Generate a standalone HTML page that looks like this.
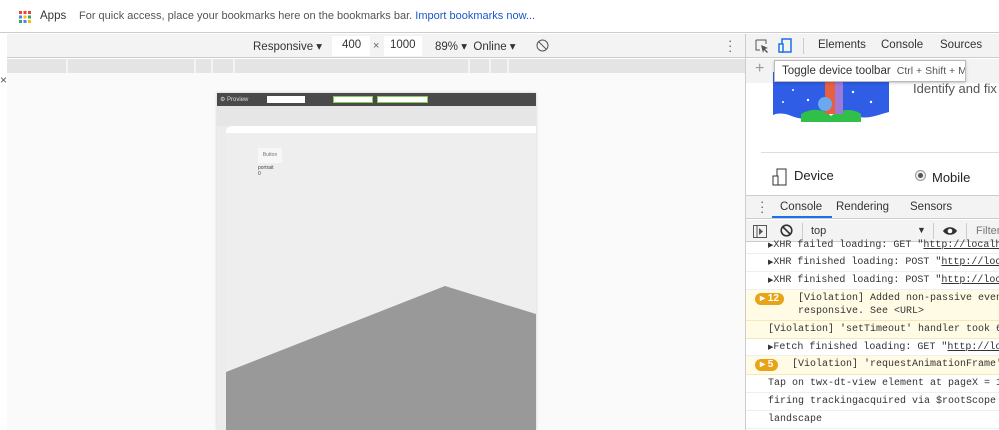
<!DOCTYPE html><html><head><style>
*{margin:0;padding:0;box-sizing:border-box}
body{width:999px;height:430px;overflow:hidden;background:#fff;font-family:"Liberation Sans",sans-serif;position:relative}
.a{position:absolute}
.mono{font-family:"Liberation Mono",monospace;font-size:10px;color:#333}
.row{position:absolute;left:746px;width:253px;height:18px;border-bottom:1px solid #efefef;padding-left:22px;line-height:17px;white-space:nowrap;overflow:hidden}
.y{background:#fffbe5;border-color:#f5e9b5}
.badge{position:absolute;left:9px;top:3px;background:#e8a317;color:#fff;border-radius:7px;font:bold 10px "Liberation Sans",sans-serif;padding:0 5px;height:12px;line-height:12px}
</style></head><body>
<div class="a" style="left:0;top:0;width:999px;height:33px;background:#fff;border-bottom:1px solid #ccc"></div>
<svg class="a" style="left:19px;top:11px" width="12" height="12"><g>
<rect x="0" y="0" width="3" height="3" fill="#ea4335"/><rect x="4.5" y="0" width="3" height="3" fill="#ea4335"/><rect x="9" y="0" width="3" height="3" fill="#ea4335"/>
<rect x="0" y="4.5" width="3" height="3" fill="#4285f4"/><rect x="4.5" y="4.5" width="3" height="3" fill="#fbbc05"/><rect x="9" y="4.5" width="3" height="3" fill="#34a853"/>
<rect x="0" y="9" width="3" height="3" fill="#34a853"/><rect x="4.5" y="9" width="3" height="3" fill="#4285f4"/><rect x="9" y="9" width="3" height="3" fill="#fbbc05"/></g></svg>
<div class="a" style="left:40px;top:10px;font-size:11.5px;color:#333">Apps</div>
<div class="a" style="left:79px;top:10px;font-size:11px;color:#555;white-space:nowrap">For quick access, place your bookmarks here on the bookmarks bar. <span style="color:#1a57c9">Import bookmarks now...</span></div>
<div class="a" style="left:7px;top:34px;width:738px;height:24px;background:#f3f3f3;border-bottom:1px solid #ccc"></div>
<div class="a" style="left:253px;top:39px;font-size:11.5px;color:#333">Responsive ▾</div>
<div class="a" style="left:332px;top:36px;width:38px;height:20px;background:#fff"></div>
<div class="a" style="left:342px;top:39px;font-size:11.5px;color:#333">400</div>
<div class="a" style="left:373px;top:40px;font-size:11px;color:#666">×</div>
<div class="a" style="left:384px;top:36px;width:38px;height:20px;background:#fff"></div>
<div class="a" style="left:390px;top:39px;font-size:11.5px;color:#333">1000</div>
<div class="a" style="left:435px;top:39px;font-size:11.5px;color:#333">89% ▾ &nbsp;Online ▾</div>
<svg class="a" style="left:536px;top:39px" width="13" height="13"><circle cx="6.5" cy="6.5" r="5.5" fill="none" stroke="#555"/><line x1="2.5" y1="2.5" x2="10.5" y2="10.5" stroke="#555"/></svg>
<div class="a" style="left:728px;top:38px;font-size:13px;color:#555;line-height:5px;width:4px;text-align:center">·<br>·<br>·</div>
<div class="a" style="left:7px;top:59px;width:738px;height:14px;background:#e4e4e4"></div>
<div class="a" style="left:66px;top:59px;width:2px;height:14px;background:#f3f3f3"></div>
<div class="a" style="left:194px;top:59px;width:2px;height:14px;background:#f3f3f3"></div>
<div class="a" style="left:211px;top:59px;width:2px;height:14px;background:#f3f3f3"></div>
<div class="a" style="left:233px;top:59px;width:2px;height:14px;background:#f3f3f3"></div>
<div class="a" style="left:468px;top:59px;width:2px;height:14px;background:#f3f3f3"></div>
<div class="a" style="left:489px;top:59px;width:2px;height:14px;background:#f3f3f3"></div>
<div class="a" style="left:507px;top:59px;width:2px;height:14px;background:#f3f3f3"></div>
<div class="a" style="left:7px;top:73px;width:738px;height:357px;background:#fafafa"></div>
<div class="a" style="left:0;top:73px;font-size:12px;color:#555">×</div>
<div class="a" style="left:217px;top:93px;width:319px;height:337px;background:#ececec;box-shadow:0 0 3px #ccc"></div>
<div class="a" style="left:217px;top:93px;width:319px;height:13px;background:#4a4a4a"></div>
<div class="a" style="left:220px;top:96px;font-size:6px;color:#ddd">⚙ Proview</div>
<div class="a" style="left:267px;top:96px;width:38px;height:7px;background:#fff"></div>
<div class="a" style="left:333px;top:96px;width:40px;height:7px;background:#fff;border:1px solid #8c5"></div>
<div class="a" style="left:377px;top:96px;width:51px;height:7px;background:#fff;border:1px solid #8c5"></div>
<div class="a" style="left:217px;top:106px;width:319px;height:20px;background:#e6e6e6"></div>
<div class="a" style="left:226px;top:126px;width:310px;height:304px;background:#fff;border-radius:6px 0 0 0"></div>
<div class="a" style="left:226px;top:133px;width:310px;height:297px;background:#eeeeee"></div>
<svg class="a" style="left:226px;top:133px" width="310" height="297"><polygon points="0,239 219,153 310,181 310,297 0,297" fill="#999"/></svg>
<div class="a" style="left:258px;top:148px;width:24px;height:15px;background:#f7f7f7;font-size:5px;color:#777;text-align:center;line-height:15px">Button</div>
<div class="a" style="left:258px;top:165px;font-size:5px;color:#444;line-height:6px">portrait<br>0</div>
<div class="a" style="left:745px;top:34px;width:254px;height:396px;background:#fff;border-left:1px solid #ccc"></div>
<div class="a" style="left:746px;top:34px;width:253px;height:24px;background:#f3f3f3;border-bottom:1px solid #ccc"></div>
<svg class="a" style="left:755px;top:39px" width="14" height="14"><path d="M1 1h10v4M1 1v10h4" fill="none" stroke="#555"/><path d="M6 6l7 3-3 1 3 3-1 1-3-3-1 3z" fill="#555"/></svg>
<svg class="a" style="left:778px;top:38px" width="14" height="15"><rect x="4" y="1" width="9" height="13" fill="none" stroke="#1a73e8" stroke-width="1.5"/><rect x="1" y="6" width="4" height="8" fill="#fff" stroke="#1a73e8" stroke-width="1.5"/></svg>
<div class="a" style="left:803px;top:38px;width:1px;height:16px;background:#ccc"></div>
<div class="a" style="left:818px;top:39px;font-size:11.5px;color:#333">Elements</div>
<div class="a" style="left:881px;top:39px;font-size:11.5px;color:#333">Console</div>
<div class="a" style="left:940px;top:39px;font-size:11.5px;color:#333">Sources</div>
<div class="a" style="left:746px;top:59px;width:253px;height:24px;background:#f3f3f3"></div>
<div class="a" style="left:755px;top:60px;font-size:16px;color:#999">+</div>
<svg class="a" style="left:773px;top:72px" width="120" height="52"><path d="M0 0h116v40c-12 3-22 8-34 4-12-5-22-5-30 0-12 5-24 4-36-1-6-2-12-2-16 0z" fill="#2f5de6"/><path d="M28 42c10-6 22-6 30 2 8-7 22-8 30-2v8H28z" fill="#30c04a"/><rect x="52" y="0" width="10" height="42" fill="#e96040"/><rect x="62" y="0" width="8" height="42" fill="#9d7ad8"/><circle cx="52" cy="32" r="7" fill="#6aa8f0"/><g fill="#fff"><circle cx="20" cy="18" r="1"/><circle cx="35" cy="28" r="1.2"/><circle cx="80" cy="20" r="1.2"/><circle cx="98" cy="30" r="1.2"/><circle cx="10" cy="30" r="1"/></g></svg>
<div class="a" style="left:774px;top:60px;width:192px;height:22px;background:#fff;border:1px solid #bbb;box-shadow:0 1px 3px rgba(0,0,0,.2);font-size:11.5px;color:#333;line-height:20px;padding-left:7px;white-space:nowrap;overflow:hidden">Toggle device toolbar <span style="font-size:10.5px;color:#555">&nbsp;Ctrl + Shift + M</span></div>
<div class="a" style="left:913px;top:81px;font-size:13px;color:#555;white-space:nowrap">Identify and fix co</div>
<div class="a" style="left:761px;top:152px;width:238px;height:1px;background:#ddd"></div>
<svg class="a" style="left:772px;top:168px" width="16" height="18"><rect x="5" y="1" width="9" height="16" fill="none" stroke="#333"/><rect x="1" y="8" width="5" height="9" fill="#fff" stroke="#333"/></svg>
<div class="a" style="left:794px;top:168px;font-size:13px;color:#222">Device</div>
<div class="a" style="left:915px;top:170px;width:11px;height:11px;border-radius:50%;border:1px solid #999;background:#eee"></div>
<div class="a" style="left:918px;top:173px;width:5px;height:5px;border-radius:50%;background:#555"></div>
<div class="a" style="left:932px;top:170px;font-size:13px;color:#222">Mobile</div>
<div class="a" style="left:746px;top:195px;width:253px;height:24px;background:#f3f3f3;border-top:1px solid #ccc;border-bottom:1px solid #ccc"></div>
<div class="a" style="left:760px;top:199px;font-size:13px;color:#555;line-height:5px">·<br>·<br>·</div>
<div class="a" style="left:780px;top:201px;font-size:11.5px;color:#333">Console</div>
<div class="a" style="left:772px;top:216px;width:60px;height:2px;background:#1a73e8"></div>
<div class="a" style="left:836px;top:201px;font-size:11.5px;color:#333">Rendering</div>
<div class="a" style="left:910px;top:201px;font-size:11.5px;color:#333">Sensors</div>
<div class="a" style="left:746px;top:220px;width:253px;height:22px;background:#f3f3f3;border-bottom:1px solid #ccc"></div>
<svg class="a" style="left:753px;top:225px" width="14" height="13"><rect x=".5" y=".5" width="13" height="12" fill="none" stroke="#555"/><line x1="4" y1="1" x2="4" y2="12" stroke="#555"/><path d="M6 3l4 3.5-4 3.5z" fill="#555"/></svg>
<svg class="a" style="left:780px;top:224px" width="13" height="13"><circle cx="6.5" cy="6.5" r="5.3" fill="none" stroke="#333" stroke-width="1.6"/><line x1="3" y1="3" x2="10" y2="10" stroke="#333" stroke-width="1.6"/></svg>
<div class="a" style="left:802px;top:223px;width:1px;height:16px;background:#ccc"></div>
<div class="a" style="left:811px;top:225px;font-size:11px;color:#333">top</div>
<div class="a" style="left:917px;top:225px;font-size:9px;color:#333">▼</div>
<div class="a" style="left:933px;top:223px;width:1px;height:16px;background:#ccc"></div>
<svg class="a" style="left:942px;top:226px" width="16" height="10"><path d="M1 5C4 0 12 0 15 5 12 10 4 10 1 5z" fill="#333"/><circle cx="8" cy="5" r="2.3" fill="#fff"/></svg>
<div class="a" style="left:966px;top:223px;width:1px;height:16px;background:#ccc"></div>
<div class="a" style="left:976px;top:225px;font-size:11px;color:#777">Filter</div>
<div class="row mono" style="top:237px;height:17px"><span style="font-size:7px">▶</span>XHR failed loading: GET "<u>http://localh</u></div>
<div class="row mono" style="top:254px"><span style="font-size:7px">▶</span>XHR finished loading: POST "<u>http://loc</u></div>
<div class="row mono" style="top:272px"><span style="font-size:7px">▶</span>XHR finished loading: POST "<u>http://loc</u></div>
<div class="row mono y" style="top:290px;height:31px;padding-left:52px;line-height:13px;padding-top:2px"><span class="badge">▸ 12</span>[Violation] Added non-passive event<br>responsive. See &lt;URL&gt;</div>
<div class="row mono y" style="top:321px;padding-left:22px">[Violation] 'setTimeout' handler took 62</div>
<div class="row mono" style="top:339px;height:17px"><span style="font-size:7px">▶</span>Fetch finished loading: GET "<u>http://lo</u></div>
<div class="row mono y" style="top:356px;height:19px;padding-left:46px"><span class="badge">▸ 5</span>[Violation] 'requestAnimationFrame'</div>
<div class="row mono" style="top:375px">Tap on twx-dt-view element at pageX = 15</div>
<div class="row mono" style="top:393px">firing trackingacquired via $rootScope a</div>
<div class="row mono" style="top:411px">landscape</div>
</body></html>
